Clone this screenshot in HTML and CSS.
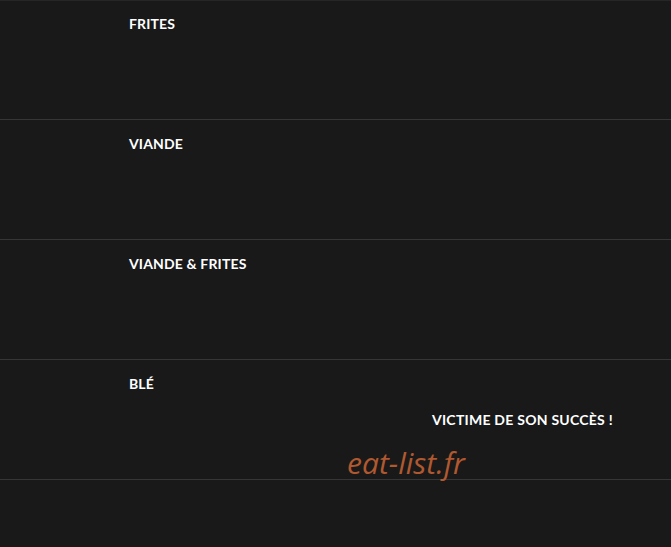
FILE: index.html
```html
<html lang="fr">

<head>
    <meta charset="UTF-8">
    <meta name="viewport" content="width=device-width, initial-scale=1.0">
    <title>Menu</title>
    <link rel="stylesheet" href="styles.css">
</head>

<body>
    <div class="menu">
        <div class="section first">
            <h2 class="title">FRITES</h2>
        </div>
        <div class="section">
            <h2 class="title">VIANDE</h2>
        </div>
        <div class="section">
            <h2 class="title">VIANDE &amp; FRITES</h2>
        </div>
        <div class="section">
            <h2 class="title">BLÉ</h2>
            <p class="soldout">VICTIME DE SON SUCCÈS !</p>
            <span class="watermark">eat-list.fr</span>
        </div>
    </div>
</body>

</html>
```

FILE: styles.css
```css
html,
body {
    width: 100%;
    height: 100%;
    padding: 0;
    margin: 0;
    background-color: #191919;
}

.menu {
    display: flex;
    flex-direction: column;
}

.section {
    position: relative;
    height: 119px;
    border-bottom: 1px solid #363636;
    box-sizing: content-box;
}

.section.first {
    height: 118px;
    border-top: 1px solid #262626;
}

.title {
    margin: 0;
    padding: 16px 0 0 129px;
    font-family: Lato, "Liberation Sans", sans-serif;
    font-weight: 700;
    font-size: 14px;
    line-height: 16px;
    letter-spacing: 0.15px;
    color: #fff;
}

.first .title {
    padding-top: 15px;
}

.soldout {
    margin: 20px 0 0 432px;
    font-family: Lato, "Liberation Sans", sans-serif;
    font-weight: 700;
    font-size: 14px;
    line-height: 16px;
    letter-spacing: 0.25px;
    color: #fff;
}

.watermark {
    position: absolute;
    left: 347px;
    top: 85px;
    font-family: "Open Sans", sans-serif;
    font-style: italic;
    font-size: 30px;
    line-height: 36px;
    color: #b0582f;
}
```
